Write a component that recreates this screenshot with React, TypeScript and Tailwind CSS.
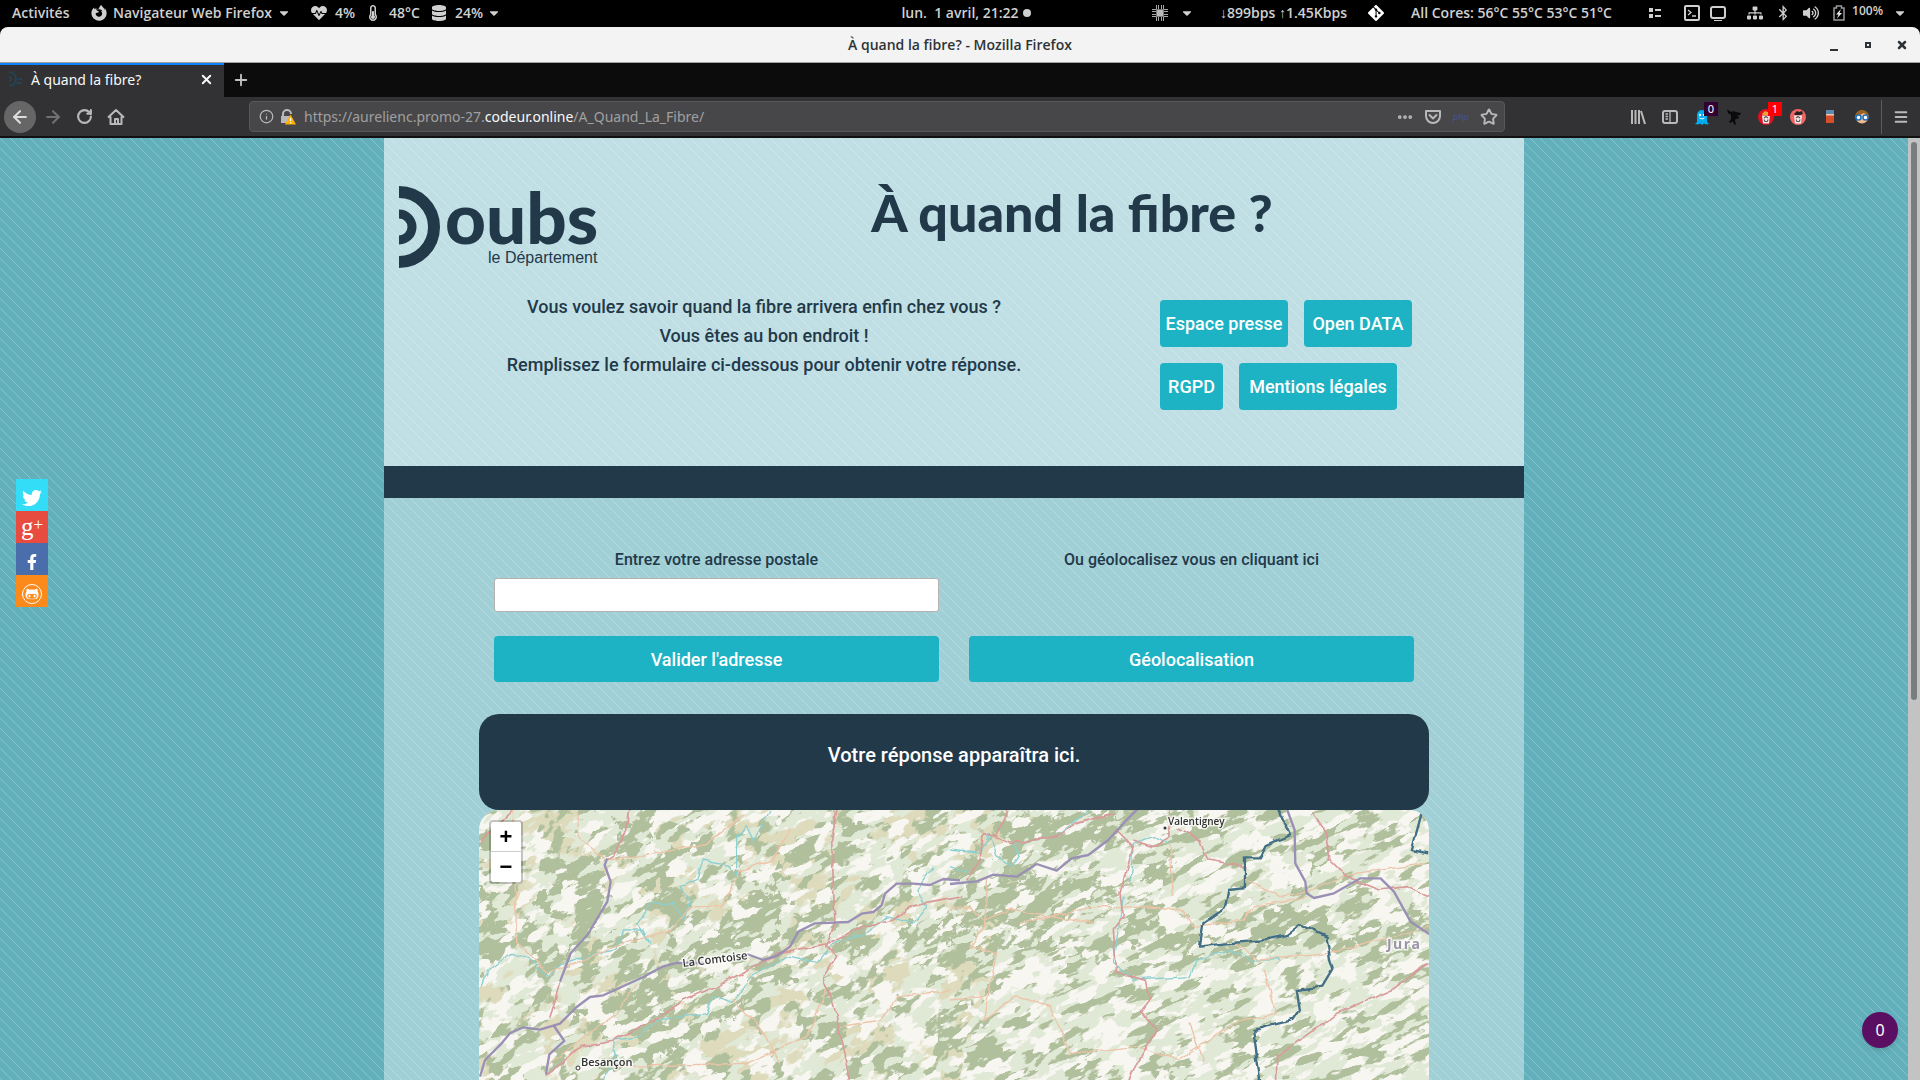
import React from "react";
import {
  FaHeartbeat, FaThermometerHalf, FaDatabase, FaFirefoxBrowser, FaCaretDown, FaBluetoothB,
  FaVolumeUp, FaTwitter, FaFacebookF, FaGithubAlt, FaSitemap,
} from "react-icons/fa";
import { SiGit } from "react-icons/si";
import { ArrowLeft, ArrowRight, RotateCw, Star, Plus, X, Info, Menu, Ellipsis } from "lucide-react";

const stripes =
  "bg-[#62b0bb] bg-[linear-gradient(45deg,rgba(255,255,255,0.24)_3%,transparent_3%,transparent_47%,rgba(255,255,255,0.24)_47%,rgba(255,255,255,0.24)_53%,transparent_53%,transparent_97%,rgba(255,255,255,0.24)_97%)] bg-[size:10px_10px]";

function Stat({ icon, text, w }: { icon: React.ReactNode; text: string; w: string }) {
  return (
    <span className={"flex items-center gap-2 " + w}>
      {icon}
      {text}
    </span>
  );
}

function TopBar() {
  return (
    <div className="grid h-[27px] grid-cols-[1fr_auto_1fr] items-center whitespace-nowrap bg-black pb-0.5 font-['Open_Sans',sans-serif] text-[14px] font-semibold leading-5 text-[#d0d0d0]">
      <div className="flex items-center pl-3">
        <span className="w-[79px]">Activités</span>
        <FaFirefoxBrowser className="mr-1.5 size-4" />
        <span className="w-[164px]">Navigateur Web Firefox</span>
        <FaCaretDown className="mr-5 size-3.5" />
        <Stat w="w-[54px]" icon={<FaHeartbeat className="size-4" />} text="4%" />
        <Stat w="w-[66px]" icon={<FaThermometerHalf className="size-4" />} text="48°C" />
        <Stat w="w-[56px]" icon={<FaDatabase className="size-4" />} text="24%" />
        <FaCaretDown className="size-3.5" />
      </div>
      <div className="flex items-center gap-1 pl-3">
        <span>lun.&nbsp; 1 avril, 21:22</span>
        <span className="size-2 rounded-full bg-[#d0d0d0]" />
      </div>
      <div className="flex items-center justify-end pr-[13px]">
        <svg className="mr-3 size-4" viewBox="0 0 16 16" fill="none" stroke="#a8a8a8">
          <path d="M4.500 0v16M6.500 0v16M9.500 0v16M11.500 0v16M0 4.500h16M0 6.500h16M0 9.500h16M0 11.500h16" strokeWidth="1" />
          <rect x="4.500" y="4.500" width="7" height="7" fill="#b8b8b8" stroke="#777" />
        </svg>
        <FaCaretDown className="mr-[26px] size-3.5" />
        <span className="w-[148px]">↓899bps ↑1.45Kbps</span>
        <SiGit className="mr-[27px] size-4 text-white" />
        <span className="w-[236px]">All Cores: 56°C 55°C 53°C 51°C</span>
        <svg className="mr-[21px] size-4" viewBox="0 0 16 16" fill="currentColor">
          <path d="M2 3h4v4H2zM2 9h4v4H2zM8 4h6v2H8zM8 10h6v2H8z" />
        </svg>
        <svg className="mr-[10px] size-4" viewBox="0 0 16 16" fill="none" stroke="currentColor" strokeWidth="2">
          <rect x="1" y="1" width="14" height="14" rx="1" />
          <path d="M4 5l3 2.500-3 2.500M8 11h4" strokeWidth="1.300" />
        </svg>
        <svg className="mr-[21px] size-4" viewBox="0 0 16 16" fill="none" stroke="currentColor" strokeWidth="2">
          <rect x="1" y="2" width="14" height="11" rx="2" />
          <path d="M4 15.500h8" strokeWidth="1" />
        </svg>
        <FaSitemap className="mr-3 size-4" />
        <FaBluetoothB className="mr-3 size-4" />
        <FaVolumeUp className="mr-3.5 size-4" />
        <svg className="mr-[7px] h-4 w-3" viewBox="0 0 12 16" fill="none">
          <path d="M1 3h2.500V1h5v2H11v12H1z" stroke="#999" strokeWidth="1.500" />
          <path d="M8 4L3 9.500h2.500L4 13.500l5-5.500H6.500z" fill="#e8e8e8" />
        </svg>
        <span className="mr-2.5 pb-1 text-[12px]">100%</span>
        <FaCaretDown className="size-3.5" />
      </div>
    </div>
  );
}

function TitleBar() {
  return (
    <div className="bg-black">
      <div className="grid h-9 grid-cols-[1fr_auto_1fr] items-center rounded-t-lg border-b border-[#a0a39d] bg-[#f3f3f3] font-['Open_Sans',sans-serif] text-[14px] font-semibold text-[#2e3436]">
        <span />
        <span>À quand la fibre? - Mozilla Firefox</span>
        <div className="flex items-center justify-end gap-[22px] pr-3">
          <button aria-label="Réduire" className="flex h-3 w-3 items-end justify-center"><span className="h-0.5 w-2 bg-[#2e3436]" /></button>
          <button aria-label="Agrandir" className="flex w-3 justify-center"><span className="size-1.5 border-2 border-[#2e3436]" /></button>
          <button aria-label="Fermer"><X className="size-3" strokeWidth={5} /></button>
        </div>
      </div>
    </div>
  );
}

function TabBar() {
  return (
    <div className="flex h-[34px] bg-[#0c0c0d] font-['Noto_Sans',sans-serif] text-[14px] text-[#f9f9fa]">
      <div className="flex w-56 items-center justify-between border-t-2 border-[#0a84ff] bg-[#323234] pb-1 pl-2 pr-2.5">
        <div className="flex items-center gap-[7px]">
          <svg className="size-4" viewBox="0 0 16 16" fill="none" stroke="#23465a" strokeWidth="1.500">
            <path d="M1 1a7 7 0 0 1 0 14M1 6a2 2 0 0 1 0 4M7 8h2M10 8h2M13 7v2M8 12h6" />
          </svg>
          <span>À quand la fibre?</span>
        </div>
        <button aria-label="Fermer l’onglet"><X className="size-[15px]" strokeWidth={3} /></button>
      </div>
      <button aria-label="Nouvel onglet" className="ml-2 text-[#c0c0c0]"><Plus className="size-[18px]" strokeWidth={2.5} /></button>
    </div>
  );
}

function BinIcon({ bg, badge }: { bg: string; badge?: boolean }) {
  return (
    <span className="relative flex w-4">
      <svg className="size-4" viewBox="0 0 16 16">
        <circle cx="8" cy="8" r="8" fill={bg} />
        <path d="M4 5l3-3 2 1 3-1 1 3-3 1H5z" fill={badge ? "#e8a33a" : "#222"} />
        <path d="M4 6.500h8l-1 8H5z" fill="#f3e6e6" />
        <path d="M6 9l2-1.500L10 9M10.200 10.500l-1 2H7l-1-2" stroke="#555" strokeWidth="1.100" fill="none" />
      </svg>
      {badge && <span className="absolute -top-[7px] left-2.5 w-3.5 bg-[#f00] text-center text-[11px] leading-[14px] text-white">1</span>}
    </span>
  );
}

function Toolbar() {
  return (
    <div className="flex h-[41px] items-center border-b-2 border-[#111] bg-[#323234] pl-1 pr-[11px] font-['Noto_Sans',sans-serif] text-[14px] text-[#b9b9ba]">
      <button aria-label="Page précédente" className="flex size-8 items-center justify-center rounded-full bg-[#666667] text-[#ddd]"><ArrowLeft className="size-5" strokeWidth={2.5} /></button>
      <button aria-label="Page suivante" className="ml-[7px] text-[#717172]"><ArrowRight className="size-5" strokeWidth={2.5} /></button>
      <button aria-label="Actualiser" className="ml-[13px]"><RotateCw className="size-[17px]" strokeWidth={3} /></button>
      <button aria-label="Accueil" className="ml-[14px]">
        <svg className="size-[18px]" viewBox="0 0 18 18" fill="none" stroke="currentColor" strokeWidth="2">
          <path d="M1 9.500L9 2l8 7.500M3.500 8.500V16h11V8.500M8 16v-5h3v5" strokeLinejoin="round" />
        </svg>
      </button>
      <div className="ml-[124px] flex h-[31px] min-w-0 flex-1 items-center rounded-sm border border-[#58585a] bg-[#474749] pl-[9px] pr-1.5">
        <Info className="size-[15px]" />
        <svg className="ml-1.5 size-4" viewBox="0 0 16 16">
          <path d="M3 8V5a4 4 0 0 1 8 0" fill="none" stroke="#b9b9ba" strokeWidth="2" />
          <path d="M1 7h9v7H1z" fill="#b9b9ba" />
          <path d="M10.500 5.500L16 15.500H5z" fill="#ffb000" />
          <path d="M10 9h1.200v3H10zM10 13h1.200v1.200H10z" fill="#fff" />
        </svg>
        <span className="relative ml-2 flex flex-1 items-center">
          <input aria-label="Adresse du site" className="w-full bg-transparent outline-none" />
          <span className="pointer-events-none absolute inset-0 text-[#a0a0a1]">
            https://aurelienc.promo-27.<b className="font-normal text-[#f9f9fa]">codeur.online</b>/A_Quand_La_Fibre/
          </span>
        </span>
        <Ellipsis className="size-[18px]" strokeWidth={3} />
        <svg className="ml-[11px] size-4" viewBox="0 0 16 16" fill="none" stroke="currentColor" strokeWidth="2" strokeLinecap="round" strokeLinejoin="round">
          <path d="M1 2h14v5a7 7 0 0 1-14 0zM4.500 6L8 9.500 11.500 6" />
        </svg>
        <span className="ml-3 w-4 text-[9px] italic text-[#43539a]">php</span>
        <Star className="ml-[11px] size-[18px]" strokeWidth={2.5} />
      </div>
      <div className="ml-[125px] flex items-center gap-4">
        <svg className="size-4" viewBox="0 0 16 16" stroke="currentColor" strokeWidth="2">
          <path d="M2 1v14M5.500 1v14M9 1v14M11 2l4 13" />
        </svg>
        <svg className="size-4" viewBox="0 0 16 16" fill="none" stroke="currentColor" strokeWidth="2">
          <rect x="1" y="2" width="14" height="12" rx="2" />
          <path d="M8 2v12M3.500 5h2.500M3.500 7.500h2.500M3.500 10h2.500" strokeWidth="1.300" />
        </svg>
        <span className="relative flex w-4">
          <svg className="size-4" viewBox="0 0 16 16">
            <path d="M3 6a5 5 0 0 1 10 0v7l2 2-3 .500-2-1-2 1.500-2-1.500-2 1-3-.500 2-2z" fill="#00aef0" />
            <circle cx="6" cy="6" r="1.200" fill="#fff" /><circle cx="10" cy="6" r="1.200" fill="#fff" />
            <path d="M5.500 9q2.500 2 5 0" stroke="#fff" fill="none" />
          </svg>
          <span className="absolute -top-[7px] left-2.5 w-3.5 bg-[#330033] text-center text-[11px] leading-[14px] text-white">0</span>
        </span>
        <svg className="size-4" viewBox="0 0 16 16" fill="#0a0a0a">
          <path d="M1 0l4 3 2-1 3 1 5 1-1 2-3 .500 2 1.500-1 2-2-.500-1 2 1 4H8l-1-3-3 1.500-1-1 2-3V6L2 4z" />
        </svg>
        <BinIcon bg="#e01020" badge />
        <BinIcon bg="#f06464" />
        <svg className="size-4" viewBox="0 0 16 16"><path d="M4 1h8v4H4z" fill="#5f88ad" /><path d="M4 5h8v9H4z" fill="#d94e2a" /><path d="M4 5h8v1.500H4z" fill="#e8c9a8" /></svg>
        <svg className="size-4" viewBox="0 0 16 16">
          <circle cx="8" cy="8" r="6.500" fill="#f0b98a" /><path d="M1 8a7 7 0 0 1 14 0L10 4z" fill="#9a6220" />
          <circle cx="4.500" cy="8.500" r="2.500" fill="#fff" stroke="#1f6fc0" strokeWidth="1.500" /><circle cx="11.500" cy="8.500" r="2.500" fill="#fff" stroke="#1f6fc0" strokeWidth="1.500" />
        </svg>
      </div>
      <span className="ml-[11px] mr-[11px] h-[34px] w-px bg-[#5c5c5e]" />
      <button aria-label="Menu"><Menu className="size-4" strokeWidth={3} /></button>
    </div>
  );
}

function Logo() {
  return (
    <svg className="h-[82px] w-[204px] shrink-0" viewBox="0 0 204 82" fill="none" stroke="#22394a" role="img" aria-label="Doubs le Département">
      <path d="M0 6a35 35 0 0 1 0 70" strokeWidth="12" />
      <path d="M0 28a13 13 0 0 1 0 26" strokeWidth="9" />
      <text x="46" y="58" fill="#22394a" stroke="none" className="font-['Lato',sans-serif] text-[71px] font-black">oubs</text>
      <text x="89" y="77" fill="#22394a" stroke="none" className="font-['Liberation_Sans',sans-serif] text-[16px]">le Département</text>
    </svg>
  );
}

const socials = [
  { name: "Twitter", bg: "bg-[#33ddf8]", icon: <FaTwitter className="size-5" /> },
  { name: "Google Plus", bg: "bg-[#e84c41]", icon: <span className="flex pb-1.5 font-['Liberation_Serif',serif] text-[25px] leading-5">g<span className="text-[17px] leading-4">+</span></span> },
  { name: "Facebook", bg: "bg-[#4a6dab]", icon: <FaFacebookF className="size-4" /> },
  { name: "GitHub", bg: "bg-[#fb8a1a]", icon: <span className="flex size-5 items-center justify-center rounded-full border border-white"><FaGithubAlt className="size-3.5" /></span> },
];

function Terrain({ id, freq, oct, seed, color, k, b }: { id: string; freq: string; oct: number; seed: number; color: [string, string, string]; k: number; b: number }) {
  return (
    <filter id={id} x="0" y="0" width="100%" height="100%" colorInterpolationFilters="sRGB">
      <feTurbulence type="fractalNoise" baseFrequency={freq} numOctaves={oct} seed={seed} />
      <feColorMatrix values={`0 0 0 0 ${color[0]} 0 0 0 0 ${color[1]} 0 0 0 0 ${color[2]} ${k} 0 0 0 ${b}`} />
    </filter>
  );
}

const haloed = { paintOrder: "stroke" } as const;

function RegionMap() {
  return (
    <svg className="block h-[470px] w-full" viewBox="0 0 950 470" preserveAspectRatio="xMidYMin slice" role="img" aria-label="Carte du Doubs">
      <defs>
        <Terrain id="tan" freq="0.018 0.028" oct={6} seed={9} color={["0.87", "0.86", "0.74"]} k={20} b={-10} />
        <Terrain id="pale" freq="0.03 0.06" oct={6} seed={21} color={["0.88", "0.91", "0.84"]} k={20} b={-9.2} />
        <Terrain id="wood" freq="0.03 0.05" oct={6} seed={4} color={["0.694", "0.753", "0.612"]} k={24} b={-12.4} />
        <Terrain id="woodEast" freq="0.025 0.085" oct={6} seed={14} color={["0.694", "0.753", "0.612"]} k={24} b={-12.6} />
        <Terrain id="clearing" freq="0.035 0.08" oct={6} seed={33} color={["0.969", "0.965", "0.945"]} k={24} b={-14} />
        <Terrain id="meadow" freq="0.04 0.1" oct={5} seed={52} color={["0.88", "0.91", "0.84"]} k={24} b={-14} />
        <filter id="ragged" x="-5%" y="-5%" width="110%" height="110%">
          <feTurbulence type="fractalNoise" baseFrequency="0.06" numOctaves={5} seed={7} />
          <feDisplacementMap in="SourceGraphic" scale="44" xChannelSelector="R" yChannelSelector="G" />
        </filter>
        <filter id="wobble" x="-5%" y="-5%" width="110%" height="110%" colorInterpolationFilters="sRGB">
          <feTurbulence type="fractalNoise" baseFrequency="0.07" numOctaves={2} seed={2} />
          <feDisplacementMap in="SourceGraphic" scale="6" xChannelSelector="R" yChannelSelector="G" />
        </filter>
        <clipPath id="west"><path d="M0 0h560L420 470H0z" /></clipPath>
        <clipPath id="east"><path d="M560 0h390v470H420z" /></clipPath>
      </defs>
      <rect width="950" height="470" fill="#f7f6f1" />
      <g transform="rotate(-27 475 235)">
        <rect x="-200" y="-400" width="1350" height="1270" filter="url(#pale)" />
      </g>
      <g clipPath="url(#west)">
        <g transform="rotate(-40 475 235)">
          <rect x="-200" y="-400" width="1350" height="1270" filter="url(#tan)" />
        </g>
        <g transform="rotate(-40 475 235)">
          <rect x="-200" y="-400" width="1350" height="1270" filter="url(#wood)" />
        </g>
      </g>
      <g clipPath="url(#east)">
        <g transform="rotate(-24 475 235)">
          <rect x="-200" y="-400" width="1350" height="1270" filter="url(#woodEast)" />
        </g>
      </g>
      <g filter="url(#ragged)" fill="#b1c09c">
        <g transform="translate(-9 -10) scale(0.3333)">
          <path d="M245 170l165 5-10 130-40 70-160-40zM440 95l80-40 50 60-80 65zM590 150l110-35-70 80-90 80-30-10zM730 400l50-70 100-60 50-90 20 100-10 60-50 90-120 20-220 50-10-20zM300 640l180-80 160-40 100 40-140 40-40 40-140 50h-50zM500 690l260-70 100-80 120-70 30 20-140 110-200 110-120 70-110 20zM1180 410l260-50v60l-190 0-130 80zM960 430l40-100 90-30v60zM1100 30h80l-10 120-60 10zM30 240l90 60-20 100-70 20zM300 440l130-40-30 60-110 60z" />
        </g>
        <g transform="translate(471 -10) scale(0.3333)">
          <path d="M180 60l300-10-70 110-80 50-200 30zM110 240l370-20 20 80-100 0-200 80-200 0zM0 400l480 20-10 60-170-20-300-50zM570 165l100-10-10 90-100 0zM530 345l220 45-10 80-140-50-90-10zM770 410l230-80 140 10 10 60-200 60zM1150 400l250-60 40 40-200 90zM300 60l230-20-30 60-140 60zM1060 120l70-40 10 90-60 60zM700 40h140l-20 60-100 20z" />
        </g>
      </g>
      <g transform="rotate(-27 475 235)">
        <rect x="-200" y="-400" width="1350" height="1270" filter="url(#meadow)" />
      </g>
      <g transform="rotate(-30 475 235)">
        <rect x="-200" y="-400" width="1350" height="1270" filter="url(#clearing)" />
      </g>
      <g fill="none" filter="url(#wobble)" strokeLinejoin="round">
        <g transform="translate(-9 -10) scale(0.3333)">
          <path stroke="#8ccfd0" strokeWidth="4" d="M30 560l30-50 60-50 60 20 60 50 40-40 100-30 60-10 20-60 60 0 20 40-40-60 40-60 70 0 30 50 20-60-30-40 50-20 20-60 60 10 40 40 0-120 30-30 20 40 50-90M400 840l40-70-10-50 80-10 50-50 150-20 20-50 60 20 50-80 110-60 90 20 50-60 100-30 60-50 80 20 40-50-30-50 50-70" />
          <path stroke="#edc4a8" strokeWidth="4" d="M320 40l10 80 80 60 100-10 200-40 120-90M130 30l10 400 100 90 170-70 190-60 60-70 100 0 50-110 100-30 50-100M240 790l200-150 60-90M430 800l400-10 180-80 60-140M790 600l80 80 60 110M1110 680l120-20 60-70 150-20" />
          <path stroke="#d99a9a" strokeWidth="5" d="M30 130L130 30M480 30l-10 60-40 80-15 10M270 545l-30 110M230 830l100-90 100-20 120-60 90-60 140-60 140-80 160-30 100-50 90-20 50-40 160-30M1100 30l-15 90 10 250-25 70 30 30-40 60 30 80 20 90 30 150" />
        </g>
        <g transform="translate(471 -10) scale(0.3333)">
          <path stroke="#8ccfd0" strokeWidth="4" d="M0 150l90 10 30-60 20 70 50 30 20-30-20-40 130-20 100-80M0 200l60 20M540 250l10-120 60-20 50 20M520 290l-30 200 60 50 170-10 20-50 100-30 60 30 90 0" />
          <path stroke="#edc4a8" strokeWidth="4" d="M0 330l60-10 40 40 80-30 250 40M210 370l220-50 90 0 180 10 30 50 150-20 30-40 160-30M110 230l-10 150-40 60 80 20-40 200 100-70 100 30 60 140 200-20 130 40 160-110 130-30-40-130M890 240l100 50 60-10 170-60 210-30M660 130l10 160M850 430l80 50 210-20 110-30 190-50M0 600l100-10M720 670l40 120" />
          <path stroke="#d99a9a" strokeWidth="5" d="M170 30l-30 80-40-10-10 80-40 60M130 110l50 20 140-20 60-40 110-30M500 90l50 50-40 140 10 70-30 40 10 130 90 25 10 50-30 40 50 55-60 100-30 70M550 120l60 20 50-30v-80M680 80l70 40 20 60 120 20M1090 40l40 60 10 80 50 50 100 40 80-10 70 30M980 840v-70l180-130 170-70 100-80" />
          <path stroke="#426f85" strokeWidth="7" d="M985 30l35 75-70 30-20 40h-45v90l-50 5-10 55-65 45-10 70 80-10 120-10 60-15 40-30 80 35 10 70 10 30-30 50-80 10 10 60-20 30-120 30 20 150-40 90M1415 40l-30 110 50 10" />
        </g>
      </g>
      <g fill="none" stroke="#9a8fb5" strokeWidth="7" strokeLinejoin="round">
        <path transform="translate(-9 -10) scale(0.3333)" d="M412 175l-8 20 18 50-10 60-60 100-50 55-32 85M30 830l15-50 50-50 25-30 40-18 50 7 60-18 50-50 40-30 40-5 120-55 60-32 40-10h90M830 462l50 18 40-12 40-28 25-45 50-25 100-4 40-25 35-5 25-20 10-35 35-30h50l50 4 40-18 50 4M250 675l33 48-45 40-10 60" />
        <path transform="translate(471 -10) scale(0.3333)" d="M0 252l80-8 50-20 70 6 60-38 60 20 45-37 50-10 60-45 50-55 40-40M1012 30l22 60 2 100 30 55 4 35 22 14 60-14 80-45h60l40 40 50 90 60 40" />
      </g>
      <g className="font-['Open_Sans',sans-serif] font-semibold" fill="#333" stroke="#fff" strokeOpacity="0.75" strokeWidth="3" style={haloed}>
        <text x="204" y="157" className="text-[11px]" transform="rotate(-7 204 157)">La Comtoise</text>
        <text x="102" y="256" className="text-[11px]">Besançon</text>
        <text x="689" y="15" className="text-[10px]">Valentigney</text>
        <text x="908" y="139" className="text-[14px] font-bold tracking-widest" fill="#9b93a8">Jura</text>
      </g>
      <circle cx="99" cy="258" r="2" fill="#fff" stroke="#333" />
      <circle cx="686" cy="18" r="1.500" fill="#333" />
    </svg>
  );
}

const siteButton = "rounded-[4px] bg-[#1db3c4] text-[18px] font-medium text-white";

function Site() {
  return (
    <div className={"flex min-h-0 flex-1 overflow-hidden " + stripes}>
      <nav aria-label="Réseaux sociaux" className="absolute left-4 top-[479px] z-10 flex flex-col">
        {socials.map((s) => (
          <a key={s.name} href="#" aria-label={s.name} className={"flex size-8 items-center justify-center pt-1.5 text-white " + s.bg}>{s.icon}</a>
        ))}
      </nav>
      <div className="mx-auto w-full max-w-[1140px] font-['Roboto',sans-serif] text-[#22394a]">
        <header className="h-[328px] bg-white/60 pt-12">
          <div className="flex px-[15px]">
            <Logo />
            <h1 className="-mt-3.5 flex-1 pl-8 text-center font-['Lato',sans-serif] text-[52px] font-black leading-[80px]">À quand la fibre ?</h1>
          </div>
          <div className="mt-6 grid grid-cols-[2fr_1fr]">
            <p className="text-center text-[18px] font-medium leading-[29px]">
              Vous voulez savoir quand la fibre arrivera enfin chez vous ?<br />
              Vous êtes au bon endroit !<br />
              Remplissez le formulaire ci-dessous pour obtenir votre réponse.
            </p>
            <div className="flex flex-wrap content-start gap-4 pl-4 pr-24 pt-2">
              <button className={"h-[47px] w-32 " + siteButton}>Espace presse</button>
              <button className={"h-[47px] w-[108px] " + siteButton}>Open DATA</button>
              <button className={"h-[47px] w-[63px] " + siteButton}>RGPD</button>
              <button className={"h-[47px] w-[158px] " + siteButton}>Mentions légales</button>
            </div>
          </div>
        </header>
        <div className="h-8 bg-[#22394a]" />
        <main className="bg-white/40 px-[95px] pt-[50px]">
          <form className="grid grid-cols-2 gap-x-[30px] px-[15px] text-center" onSubmit={(e) => e.preventDefault()}>
            <div className="flex flex-col">
              <label htmlFor="adresse" className="text-[16px] font-medium leading-6">Entrez votre adresse postale</label>
              <input id="adresse" type="text" className="mt-1.5 h-[34px] rounded-[3px] border border-[#b6b3ae] bg-white px-2" />
            </div>
            <label htmlFor="geoloc" className="text-[16px] font-medium leading-6">Ou géolocalisez vous en cliquant ici</label>
            <button className={"mt-6 h-[46px] " + siteButton}>Valider l'adresse</button>
            <button id="geoloc" type="button" className={"mt-6 h-[46px] " + siteButton}>Géolocalisation</button>
          </form>
          <div className="mt-8 h-24 rounded-[20px] bg-[#22394a] pt-[29px] text-center text-[20px] font-medium leading-6 text-white">Votre réponse apparaîtra ici.</div>
          <div className="relative overflow-hidden rounded-[20px]">
            <RegionMap />
            <div className="absolute left-2.5 top-2.5 flex w-[34px] flex-col rounded border-2 border-black/20 bg-white bg-clip-padding font-['Liberation_Sans',sans-serif] text-[22px] font-bold leading-[30px] text-black">
              <button aria-label="Zoom avant" className="h-[30px] border-b border-[#ccc]">+</button>
              <button aria-label="Zoom arrière" className="h-[30px]">−</button>
            </div>
          </div>
        </main>
      </div>
      <button className="absolute bottom-8 right-[22px] size-9 rounded-full bg-[#5b0f63] font-['Noto_Sans',sans-serif] text-[16px] text-white shadow-md">0</button>
      <div className="w-3 shrink-0 bg-[#c3c3c3] pl-[3px] pt-1">
        <div className="h-[558px] w-1.5 rounded-full bg-[#7a7d7e]" />
      </div>
    </div>
  );
}

export default function App() {
  return (
    <div className="relative flex h-screen flex-col overflow-hidden">
      <TopBar />
      <TitleBar />
      <TabBar />
      <Toolbar />
      <Site />
    </div>
  );
}
